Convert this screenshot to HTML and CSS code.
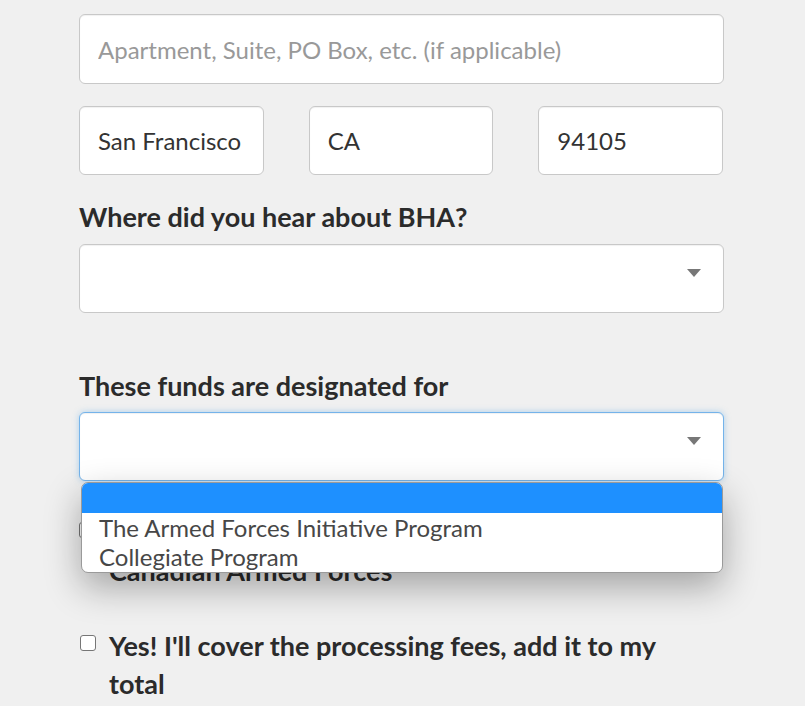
FILE: index.html
```html
<!DOCTYPE html>
<html>
<head>
<meta charset="utf-8">
<link rel="stylesheet" href="styles.css">
</head>
<body>
<form class="form">
  <input class="field" type="text" placeholder="Apartment, Suite, PO Box, etc. (if applicable)">
  <div class="row">
    <input class="field" type="text" value="San Francisco">
    <input class="field" type="text" value="CA">
    <input class="field" type="text" value="94105">
  </div>
  <label class="label first">Where did you hear about BHA?</label>
  <div class="select"><span class="arrow"></span></div>
  <label class="label second">These funds are designated for</label>
  <div class="select-wrap">
    <div class="select focus"><span class="arrow"></span></div>
    <ul class="listbox">
      <li class="opt selected"></li>
      <li class="opt">The Armed Forces Initiative Program</li>
      <li class="opt">Collegiate Program</li>
    </ul>
  </div>
  <div class="check first-check">
    <span class="box"></span>
    <span class="check-text">I am a member of the<br>Canadian Armed Forces</span>
  </div>
  <div class="check second-check">
    <span class="box"></span>
    <span class="check-text">Yes! I'll cover the processing fees, add it to my total</span>
  </div>
</form>
</body>
</html>
```
FILE: styles.css
```css
html, body {
  margin: 0;
  padding: 0;
  background: #f0f0f0;
  overflow: hidden;
}
body {
  font-family: Lato, "Open Sans", sans-serif;
  color: #333;
}
.form {
  width: 645px;
  margin-left: 79px;
  padding-top: 14px;
}
.field {
  box-sizing: border-box;
  display: block;
  width: 100%;
  height: 70px;
  margin: 0;
  padding: 0 18px;
  border: 1px solid #c8c8c8;
  border-radius: 6px;
  background: #fff;
  font-family: Lato, sans-serif;
  font-size: 24px;
  color: #333;
  box-shadow: inset 0 1px 1px rgba(0,0,0,0.06);
  outline: none;
}
.field::placeholder {
  color: #999;
}
.row {
  display: grid;
  grid-template-columns: repeat(3, 1fr);
  column-gap: 45px;
  width: 644px;
  margin-top: 22px;
}
.row .field {
  width: 100%;
  height: 69px;
}
.label {
  display: block;
  font-size: 27px;
  font-weight: 700;
  line-height: 38px;
  color: #2b2b2b;
}
.label.first {
  margin-top: 23px;
}
.label.second {
  margin-top: 54px;
}
.select {
  box-sizing: border-box;
  position: relative;
  height: 69px;
  margin-top: 8px;
  border: 1px solid #c8c8c8;
  border-radius: 6px;
  background: #fff;
  box-shadow: inset 0 1px 1px rgba(0,0,0,0.06);
}
.select.focus {
  margin-top: 7px;
  border-color: #74b3ea;
  box-shadow: inset 0 1px 1px rgba(0,0,0,0.06), 0 0 6px rgba(102,175,233,0.5);
}
.arrow {
  position: absolute;
  right: 22px;
  top: 24px;
  width: 0;
  height: 0;
  border-left: 7px solid transparent;
  border-right: 7px solid transparent;
  border-top: 8px solid #777;
}
.select-wrap {
  position: relative;
}
.listbox {
  position: absolute;
  left: 2px;
  right: 1px;
  top: 70px;
  margin: 0;
  padding: 0;
  list-style: none;
  background: #fff;
  border: 1px solid #9a9a9a;
  border-radius: 7px;
  overflow: hidden;
  box-shadow: 0 14px 36px rgba(0,0,0,0.32);
  z-index: 2;
}
.opt {
  height: 29.67px;
  line-height: 29.67px;
  padding-left: 17px;
  font-size: 24px;
  color: #474747;
}
.opt.selected {
  background: #1e90ff;
}
.check {
  display: flex;
  align-items: flex-start;
  font-size: 27px;
  font-weight: 700;
  line-height: 38px;
  color: #2b2b2b;
}
.first-check {
  margin-top: 33px;
}
.second-check {
  margin-top: 37px;
}
.box {
  box-sizing: border-box;
  flex: none;
  width: 16px;
  height: 16px;
  margin: 8px 13px 0 1px;
  border: 1px solid #767676;
  border-radius: 3px;
  background: #fff;
}
.first-check .box {
  margin-left: 0;
  margin-right: 14px;
}
.check-text {
  display: block;
  max-width: 580px;
}
```
